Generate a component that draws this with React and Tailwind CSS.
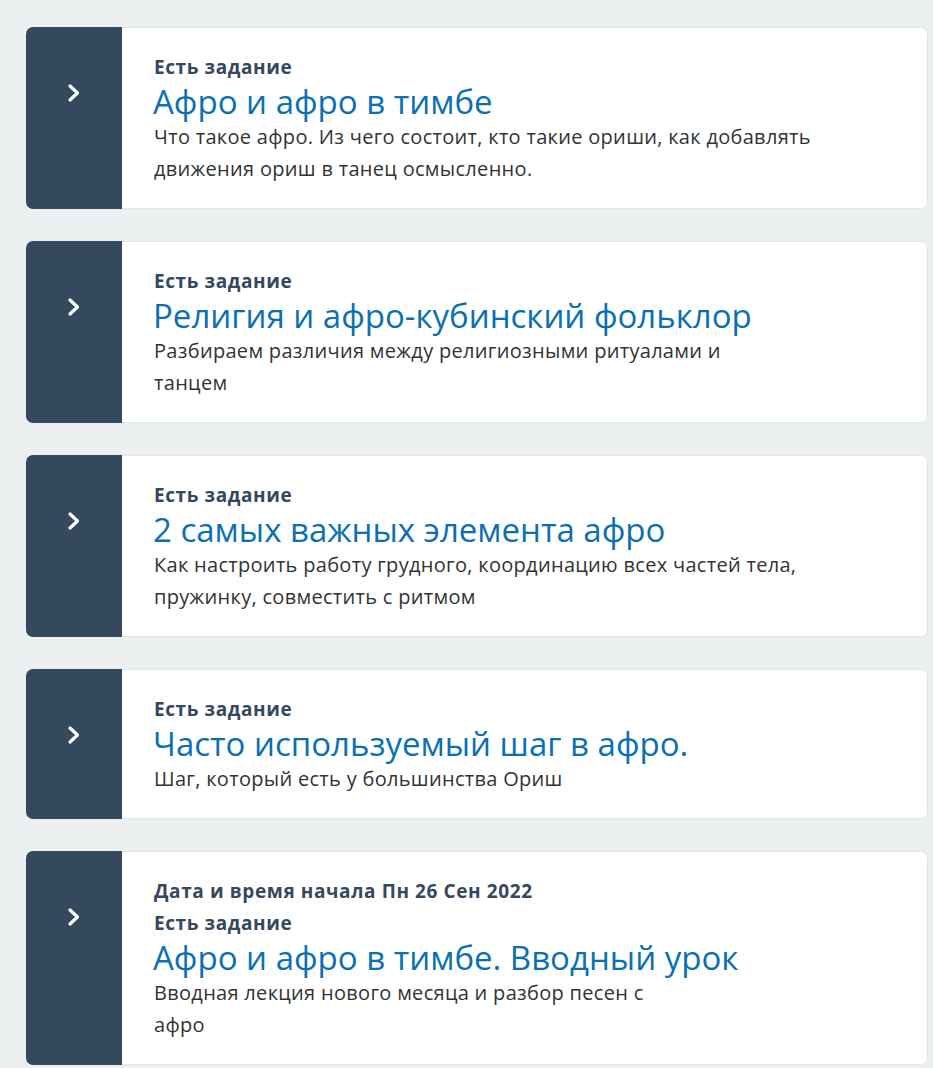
import React from "react";

const items = [
  {
    date: null,
    title: "Афро и афро в тимбе",
    lines: ["Что такое афро. Из чего состоит, кто такие ориши, как добавлять", "движения ориш в танец осмысленно."],
  },
  {
    date: null,
    title: "Религия и афро-кубинский фольклор",
    lines: ["Разбираем различия между религиозными ритуалами и", "танцем"],
  },
  {
    date: null,
    title: "2 самых важных элемента афро",
    lines: ["Как настроить работу грудного, координацию всех частей тела,", "пружинку, совместить с ритмом"],
  },
  {
    date: null,
    title: "Часто используемый шаг в афро.",
    lines: ["Шаг, который есть у большинства Ориш"],
  },
  {
    date: "Дата и время начала Пн 26 Сен 2022",
    title: "Афро и афро в тимбе. Вводный урок",
    lines: ["Вводная лекция нового месяца и разбор песен с", "афро"],
  },
];

function Chevron() {
  return (
    <svg width="18" height="20" viewBox="0 0 18 20" fill="none">
      <path d="M5 3L12.5 10L5 17" stroke="white" strokeWidth="3.2" strokeLinecap="round" strokeLinejoin="round" />
    </svg>
  );
}

export default function App() {
  return (
    <div className="min-h-[1068px] bg-[#ebeff0] pl-[26px] pr-[5px] pt-[27px] font-['Open_Sans',sans-serif]">
      <div className="flex flex-col gap-[32px]">
        {items.map((it, i) => (
          <div key={i} className="flex rounded-[7px] overflow-hidden">
            <div className="w-[96px] shrink-0 bg-[#34495e] flex justify-center pt-[56px]">
              <div className="h-[20px]"><Chevron /></div>
            </div>
            <div className="flex-1 bg-white border-y border-r border-[#e0e5e8] rounded-r-[7px] pl-[32px] py-[23px]">
              {it.date && (
                <div className="text-[19px] leading-[32px] font-bold tracking-[0.6px] text-[#34495e]">{it.date}</div>
              )}
              <div className="text-[19px] leading-[32px] font-bold tracking-[0.6px] text-[#34495e]">Есть задание</div>
              <div className="text-[33px] leading-[38px] text-[#0a70b3] -ml-[1px]">{it.title}</div>
              {it.lines.map((l, j) => (
                <div key={j} className="text-[20px] leading-[32px] tracking-[0.3px] text-[#333333] whitespace-nowrap">{l}</div>
              ))}
            </div>
          </div>
        ))}
      </div>
    </div>
  );
}
